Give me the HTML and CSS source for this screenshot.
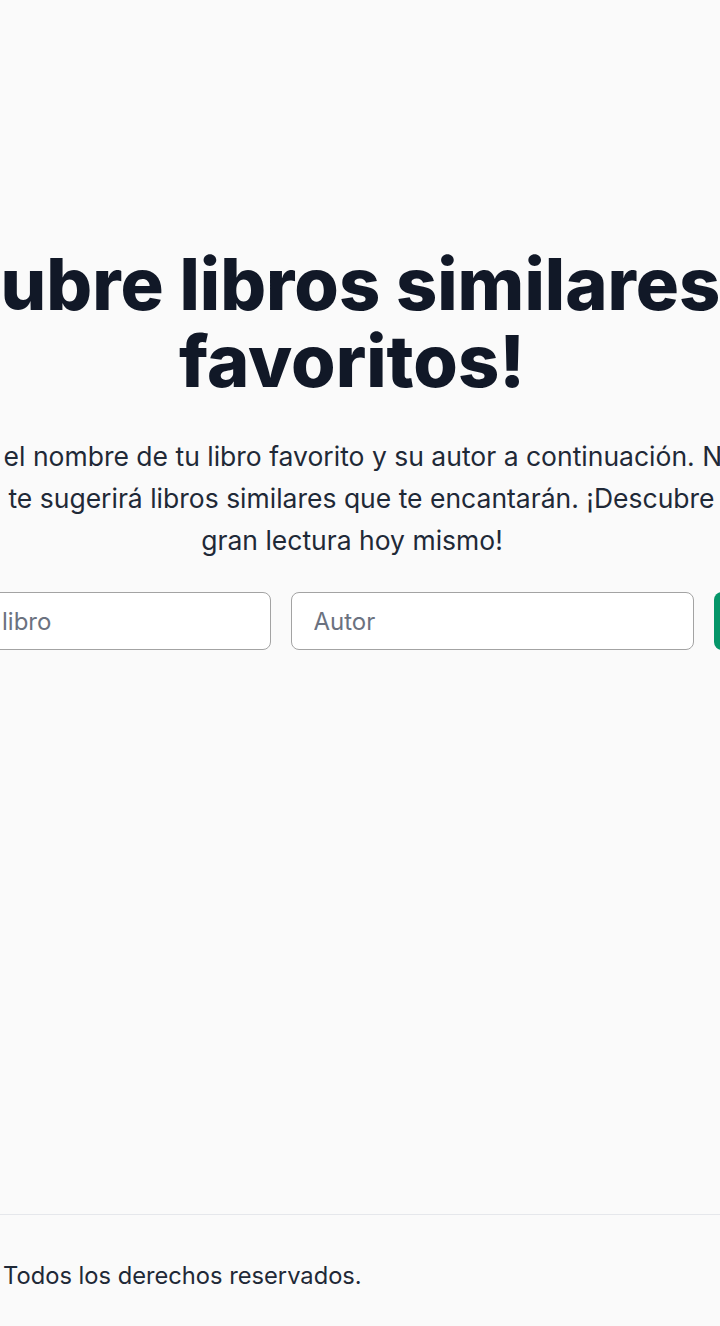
FILE: index.html
```html
<!DOCTYPE html>
<html lang="es">
<head>
<meta charset="utf-8">
<title>Descubre libros similares</title>
<link rel="stylesheet" href="styles.css">
</head>
<body>
<main class="hero">
  <h1 class="title">¡Descubre libros similares a tus favoritos!</h1>
  <p class="lead">Ingresa el nombre de tu libro favorito y su autor a continuación. Nuestra herramienta te sugerirá libros similares que te encantarán. ¡Descubre tu próxima gran lectura hoy mismo!</p>
  <form class="search">
    <input class="field" type="text" placeholder="Título del libro">
    <input class="field" type="text" placeholder="Autor">
    <button class="btn" type="button">Buscar</button>
  </form>
</main>
<footer class="footer">
  <div class="footer-inner">
    <p class="copy">© 2024 Libros Similares. Todos los derechos reservados.</p>
  </div>
</footer>
</body>
</html>
```
FILE: styles.css
```css
html, body {
  margin: 0;
  padding: 0;
}
body {
  background: #fafafa;
  font-family: Inter, "Noto Sans", sans-serif;
  color: #1f2937;
  min-height: 100vh;
  display: flex;
  flex-direction: column;
  overflow-x: hidden;
}
.hero {
  flex: 1;
  display: flex;
  flex-direction: column;
  align-items: center;
  padding: 245px 16px 0 0;
}
.title {
  flex: none;
  width: 1200px;
  margin: 0;
  font-size: 72px;
  line-height: 77px;
  font-weight: 800;
  color: #111827;
  text-align: center;
}
.lead {
  flex: none;
  width: 1040px;
  margin: 36px 0 0;
  font-size: 26.5px;
  line-height: 42px;
  text-align: center;
  color: #1f2937;
}
.search {
  flex: none;
  display: flex;
  gap: 20px;
  margin-top: 31px;
  width: 969px;
}
.field {
  width: 403px;
  height: 58px;
  box-sizing: border-box;
  border: 1.5px solid #a3a3a3;
  border-radius: 8px;
  background: #ffffff;
  padding: 0 22px;
  font-family: Inter, "Noto Sans", sans-serif;
  font-size: 24px;
  color: #111827;
}
.field::placeholder {
  color: #6b7280;
}
.btn {
  flex: 1;
  height: 58px;
  border: none;
  border-radius: 8px;
  background: #059669;
  color: #ffffff;
  font-family: Inter, "Noto Sans", sans-serif;
  font-size: 24px;
  font-weight: 600;
}
.footer {
  border-top: 1px solid #e5e7eb;
  padding: 43px 16px 32px 0;
  display: flex;
  justify-content: center;
}
.footer-inner {
  flex: none;
  width: 1266px;
}
.copy {
  margin: 0;
  font-size: 23.7px;
  line-height: 36px;
  color: #1f2937;
}
```
